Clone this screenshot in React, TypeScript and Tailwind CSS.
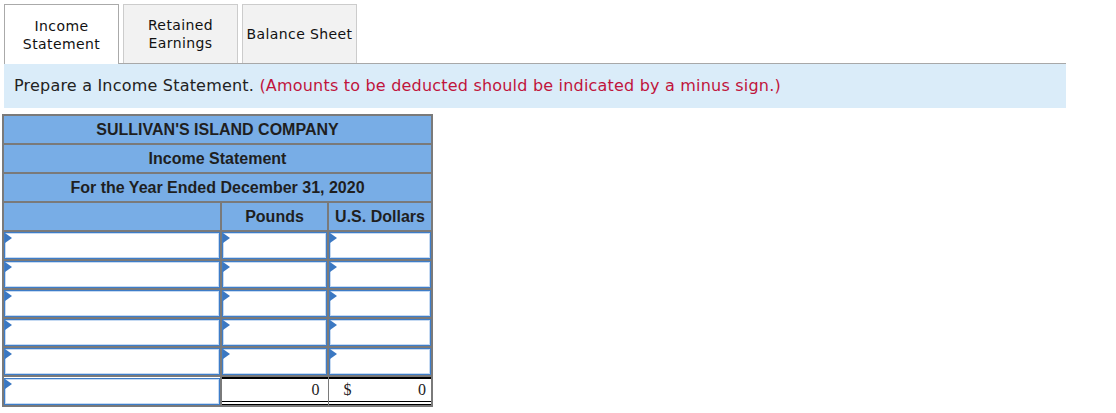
import React from 'react';

const tabs = [
    { label: ['Income', 'Statement'], active: true },
    { label: ['Retained', 'Earnings'], active: false },
    { label: ['Balance Sheet'], active: false },
];

function Marker() {
    return (
        <svg className="absolute left-0 top-0" width="7" height="10" viewBox="0 0 7 10">
            <polygon points="0,0 7,5 0,10" fill="#3b78c2" />
        </svg>
    );
}

function InputCell() {
    return (
        <td className="p-0 border-[2px] border-[#7a7a7a]">
            <div className="relative h-[27px] border border-[#3e7dc8] bg-white">
                <div className="h-full border border-[#c6daf2]" />
                <Marker />
            </div>
        </td>
    );
}

export default function App() {
    const rows = [0, 1, 2, 3, 4];

    return (
        <div className="bg-white w-[1116px] h-[413px] pt-[4px]" style={{ fontFamily: '"DejaVu Sans", Verdana, sans-serif' }}>
            {/* Tabs */}
            <div className="ml-[4px] w-[1062px] flex gap-[4px] border-b border-[#a8a8a8]">
                {tabs.map((t, i) => (
                    <div
                        key={i}
                        className={`w-[115px] flex flex-col items-center justify-center text-[14px] tracking-[0.4px] leading-[18px] text-[#111] border border-b-0 ${
                            t.active ? 'bg-white border-[#aaaaaa] -mb-px h-[60px]' : 'bg-[#f2f2f2] border-[#cccccc] h-[59px]'
                        }`}
                    >
                        {t.label.map((l) => (
                            <span key={l}>{l}</span>
                        ))}
                    </div>
                ))}
            </div>

            {/* Instructions */}
            <div className="ml-[4px] w-[1062px] h-[44px] bg-[#daecf9] flex items-center pl-[10px] text-[16px] tracking-[0.2px] text-[#222]">
                <span>Prepare a Income Statement.&nbsp;</span>
                <span className="text-[#c0143c]">(Amounts to be deducted should be indicated by a minus sign.)</span>
            </div>

            {/* Statement table */}
            <table
                className="ml-[2px] mt-[6px] border-collapse border-[2px] border-[#7a7a7a] table-fixed w-[429px]"
                style={{ fontFamily: '"Liberation Sans", Arial, sans-serif' }}
            >
                <colgroup>
                    <col className="w-[218px]" />
                    <col className="w-[107px]" />
                    <col className="w-[104px]" />
                </colgroup>
                <thead className="bg-[#78ade6] text-[#1f1f1f] font-bold text-[16px]">
                    <tr className="h-[29px]">
                        <th colSpan={3} className="border-[2px] border-[#7a7a7a] p-0 text-center">SULLIVAN'S ISLAND COMPANY</th>
                    </tr>
                    <tr className="h-[29px]">
                        <th colSpan={3} className="border-[2px] border-[#7a7a7a] p-0 text-center">Income Statement</th>
                    </tr>
                    <tr className="h-[29px]">
                        <th colSpan={3} className="border-[2px] border-[#7a7a7a] p-0 text-center">For the Year Ended December 31, 2020</th>
                    </tr>
                    <tr className="h-[29px]">
                        <th className="border-[2px] border-[#7a7a7a] p-0" />
                        <th className="border-[2px] border-[#7a7a7a] p-0 text-center">Pounds</th>
                        <th className="border-[2px] border-[#7a7a7a] p-0 text-center">U.S. Dollars</th>
                    </tr>
                </thead>
                <tbody>
                    {rows.map((r) => (
                        <tr key={r}>
                            <InputCell />
                            <InputCell />
                            <InputCell />
                        </tr>
                    ))}
                    <tr>
                        <InputCell />
                        <td className="p-0 align-top border-l-[2px] border-r border-[#7a7a7a]">
                            <div
                                className="h-[28px] border-t-[2px] border-black border-b-[4px] border-double flex items-center justify-end pr-[8px] text-[16px] text-[#222]"
                                style={{ fontFamily: '"Liberation Serif", "Times New Roman", serif', borderTopStyle: 'solid' }}
                            >
                                0
                            </div>
                        </td>
                        <td className="p-0 align-top border-r-[2px] border-[#7a7a7a]">
                            <div
                                className="h-[28px] border-t-[2px] border-black border-b-[4px] border-double flex items-center justify-between pl-[15px] pr-[5px] text-[16px] text-[#222]"
                                style={{ fontFamily: '"Liberation Serif", "Times New Roman", serif', borderTopStyle: 'solid' }}
                            >
                                <span>$</span>
                                <span>0</span>
                            </div>
                        </td>
                    </tr>
                </tbody>
            </table>
        </div>
    );
}
